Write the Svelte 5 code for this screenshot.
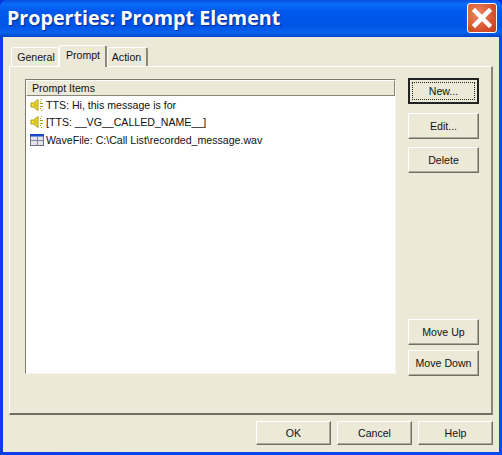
<script>
  const items = [
    { icon: 'sound', text: 'TTS: Hi, this message is for' },
    { icon: 'sound', text: '[TTS: __VG__CALLED_NAME__]' },
    { icon: 'wave', text: 'WaveFile: C:\\Call List\\recorded_message.wav' }
  ];
</script>

<div class="window">
  <header class="titlebar">
    <span class="title">Properties: Prompt Element</span>
    <div class="close">
      <svg width="30" height="30" viewBox="0 0 30 30">
        <path d="M8 8 L22 22 M22 8 L8 22" stroke="#fff" stroke-width="4.5" stroke-linecap="square" />
      </svg>
    </div>
  </header>
  <div class="client">
    <div class="tabs">
      <div class="tab first">General</div>
      <div class="tab active">Prompt</div>
      <div class="tab last">Action</div>
    </div>
    <div class="page">
      <div class="listview">
        <div class="colhead">Prompt Items</div>
        {#each items as item}
          <div class="row">
            {#if item.icon === 'sound'}
              <svg class="ico" width="14" height="14" viewBox="0 0 14 14">
                <path d="M1 5h2.500L8 1.500v11L3.500 9H1z" fill="#f4e030" stroke="#a89c18" stroke-width="1" />
                <path d="M4.500 5.500v3M6 4.500v5" stroke="#c8b420" stroke-width="1" />
                <path d="M10 3.500h1M11 1.500h1M10 10.500h1M11 12.500h1M10 5.500h3M10 8.500h3" stroke="#a89a18" stroke-width="1" />
              </svg>
            {:else}
              <svg class="ico" width="14" height="14" viewBox="0 0 14 14">
                <rect x="0.500" y="1.500" width="13" height="11" fill="#e4e4ea" stroke="#6a7080" />
                <rect x="0" y="1" width="14" height="2.500" fill="#1a4ac4" />
                <path d="M1 7.500h12M7.500 4v9" stroke="#8088a0" />
              </svg>
            {/if}
            <span>{item.text}</span>
          </div>
        {/each}
      </div>
      <div class="side">
        <button class="default"><span class="focus">New...</span></button>
        <button>Edit...</button>
        <button>Delete</button>
        <div class="spacer"></div>
        <button>Move Up</button>
        <button>Move Down</button>
      </div>
    </div>
    <div class="footer">
      <button>OK</button>
      <button>Cancel</button>
      <button>Help</button>
    </div>
  </div>
</div>

<style>
  :global(body) { margin: 0; background: #0831d9; }
  .window {
    width: 502px; height: 455px; box-sizing: border-box;
    display: flex; flex-direction: column;
    background: linear-gradient(90deg, #0a3ee8, #0a48f0);
    padding: 0 3px 3px;
    border-radius: 7px 7px 0 0;
    overflow: hidden;
    font-family: "Liberation Sans", Arial, sans-serif;
    font-size: 10.600px; color: #111;
  }
  .titlebar {
    height: 37px; flex: none; margin: 0 -3px;
    padding: 0 5px 2px 7px; box-sizing: border-box;
    display: flex; align-items: center; justify-content: space-between;
    background: linear-gradient(180deg, #0a52e0 0%, #0a6cf8 12%, #0058ee 30%, #0054e4 70%, #0a62f0 88%, #0044c8 100%);
  }
  .title {
    color: #fff; font-family: "Open Sans", sans-serif; font-weight: 700; font-size: 19.700px;
    text-shadow: 1px 1px 1px #0a2a90;
  }
  .close {
    width: 30px; height: 30px; box-sizing: border-box;
    border: 1px solid #fff; border-radius: 3px;
    background: radial-gradient(circle at 35% 35%, #ea8a66, #d6502c 65%, #bb3c18);
    display: flex; align-items: center; justify-content: center;
  }
  .close svg { display: block; margin: -1px; flex: none; }
  .client {
    flex: 1; background: #ece9d8; display: flex; flex-direction: column;
    padding: 8px 6px 7px 6px; min-height: 0;
  }
  .tabs { display: flex; height: 21px; padding-left: 2px; align-items: flex-end; position: relative; z-index: 1; }
  .tab {
    box-sizing: border-box; height: 19px; line-height: 18px; text-align: center;
    border: 1px solid #fff; border-bottom: none; border-right: 1px solid #8a8876;
    border-radius: 3px 3px 0 0; background: #ece9d8;
  }
  .first { width: 48px; border-right-color: #fff; padding-left: 2px; }
  .active { width: 48px; height: 22px; margin-bottom: -1px; border-right: 2px solid #8a8876; padding-left: 1px; }
  .last { width: 41px; border-right: 2px solid #8a8876; padding-right: 1px; }
  .page {
    flex: 1; min-height: 0; box-sizing: border-box; display: flex;
    border: 1px solid #fff; border-right: 2px solid #8a8876; border-bottom: 2px solid #716f64;
    padding: 11px 12px 37px 15px; gap: 12px;
  }
  .listview {
    flex: 1; background: #fff; box-sizing: border-box;
    margin: 1px 0 2px;
    border: 1px solid #7d7b6c; border-right-color: #f7f5ec; border-bottom-color: #f7f5ec;
  }
  .colhead {
    height: 16px; line-height: 15px; box-sizing: border-box; padding-left: 5px;
    background: #ece9d8; border: 1px solid #fff; border-right-color: #8a8876; border-bottom-color: #8a8876;
  }
  .row { display: flex; align-items: center; height: 17.500px; padding-left: 4px; gap: 2px; white-space: nowrap; }
  .ico { flex: none; }
  .side { width: 71px; flex: none; display: flex; flex-direction: column; gap: 8.500px; }
  .spacer { flex: 1; }
  .side button { height: 26px; flex: none; }
  .side button:nth-last-child(1) { margin-top: -3.500px; }
  button {
    box-sizing: border-box; padding: 0; margin: 0; font: inherit; color: #111;
    background: #ece9d8;
    border: 1px solid; border-color: #fff #716f64 #716f64 #fff;
    box-shadow: inset -1px -1px 0 #aca899;
    display: flex; align-items: center; justify-content: center;
  }
  button.default { border: 2px solid #222; padding: 2px; box-shadow: none; }
  .focus {
    flex: 1; align-self: stretch; display: flex; align-items: center; justify-content: center;
    border: 1px dotted #222;
  }
  .footer { display: flex; justify-content: flex-end; gap: 6px; margin-top: 6px; height: 24px; flex: none; }
  .footer button { width: 75px; }
</style>
